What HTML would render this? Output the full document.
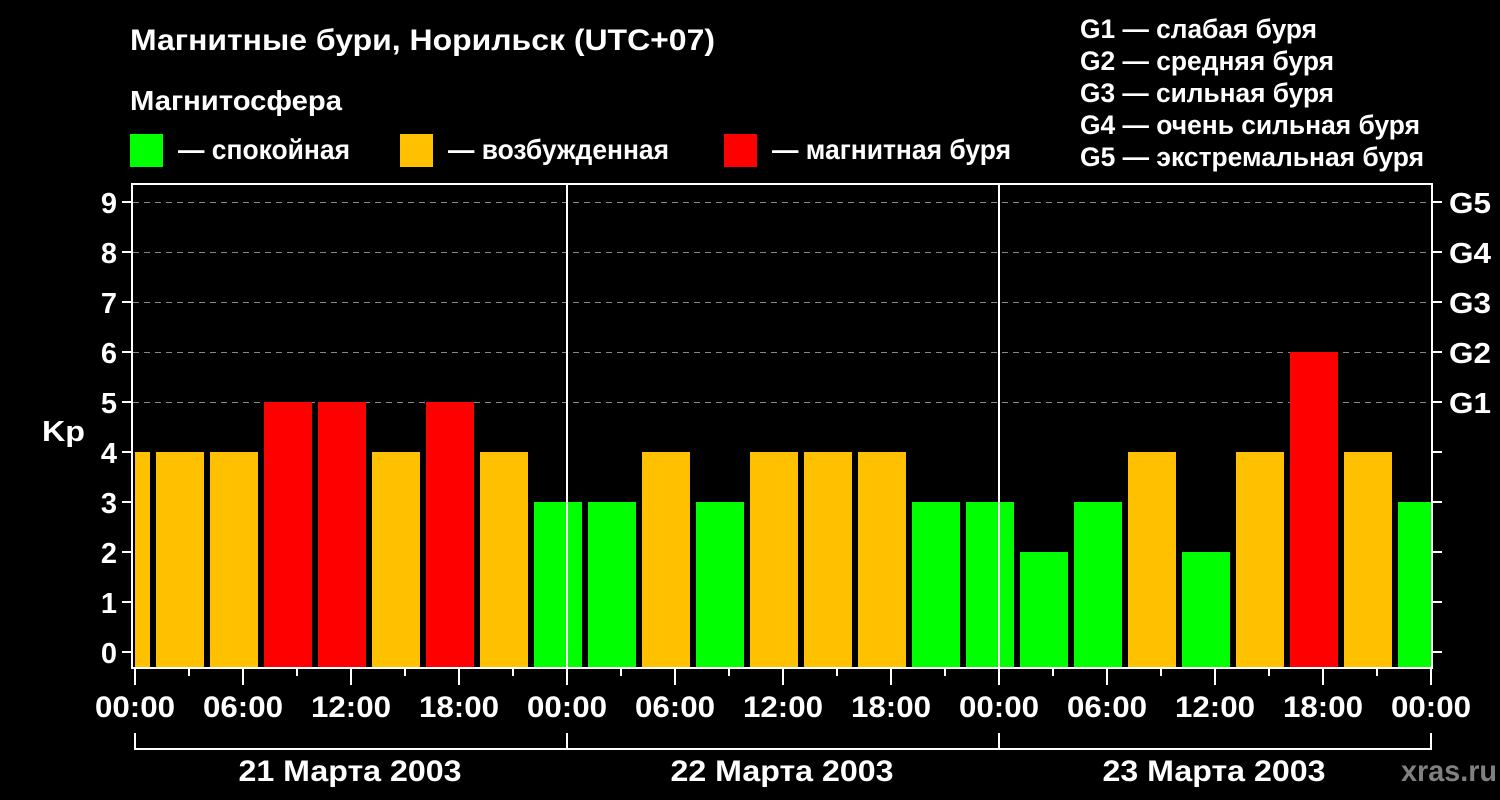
<!DOCTYPE html>
<html><head><meta charset="utf-8"><style>
html,body{margin:0;padding:0;background:#000;}
svg{display:block;}
text{font-family:"Liberation Sans",sans-serif;font-weight:bold;fill:#fff;}
</style></head><body>
<svg width="1500" height="800" viewBox="0 0 1500 800" xmlns="http://www.w3.org/2000/svg">
<rect width="1500" height="800" fill="#000"/>
<text x="130" y="50" font-size="30" textLength="585" lengthAdjust="spacingAndGlyphs">Магнитные бури, Норильск (UTC+07)</text>
<text x="130" y="110" font-size="28" textLength="212" lengthAdjust="spacingAndGlyphs">Магнитосфера</text>
<rect x="130" y="134" width="33" height="33" fill="#00ff00"/>
<text x="178" y="159" font-size="28" textLength="172" lengthAdjust="spacingAndGlyphs">— спокойная</text>
<rect x="400" y="134" width="33" height="33" fill="#ffc000"/>
<text x="448" y="159" font-size="28" textLength="221" lengthAdjust="spacingAndGlyphs">— возбужденная</text>
<rect x="724" y="134" width="33" height="33" fill="#ff0000"/>
<text x="772" y="159" font-size="28" textLength="239" lengthAdjust="spacingAndGlyphs">— магнитная буря</text>
<g font-size="27">
<text x="1080" y="38" textLength="237" lengthAdjust="spacingAndGlyphs">G1 — слабая буря</text>
<text x="1080" y="70" textLength="254" lengthAdjust="spacingAndGlyphs">G2 — средняя буря</text>
<text x="1080" y="102" textLength="254" lengthAdjust="spacingAndGlyphs">G3 — сильная буря</text>
<text x="1080" y="134" textLength="340" lengthAdjust="spacingAndGlyphs">G4 — очень сильная буря</text>
<text x="1080" y="166" textLength="344" lengthAdjust="spacingAndGlyphs">G5 — экстремальная буря</text>
</g>
<g stroke="#888" stroke-width="1" stroke-dasharray="6,5">
<line x1="133" y1="202.5" x2="1431" y2="202.5"/>
<line x1="133" y1="252.5" x2="1431" y2="252.5"/>
<line x1="133" y1="302.5" x2="1431" y2="302.5"/>
<line x1="133" y1="352.5" x2="1431" y2="352.5"/>
<line x1="133" y1="402.5" x2="1431" y2="402.5"/>
</g>
<g>
<rect x="135" y="452" width="15" height="216" fill="#ffc000"/>
<rect x="156" y="452" width="48" height="216" fill="#ffc000"/>
<rect x="210" y="452" width="48" height="216" fill="#ffc000"/>
<rect x="264" y="402" width="48" height="266" fill="#ff0000"/>
<rect x="318" y="402" width="48" height="266" fill="#ff0000"/>
<rect x="372" y="452" width="48" height="216" fill="#ffc000"/>
<rect x="426" y="402" width="48" height="266" fill="#ff0000"/>
<rect x="480" y="452" width="48" height="216" fill="#ffc000"/>
<rect x="534" y="502" width="48" height="166" fill="#00ff00"/>
<rect x="588" y="502" width="48" height="166" fill="#00ff00"/>
<rect x="642" y="452" width="48" height="216" fill="#ffc000"/>
<rect x="696" y="502" width="48" height="166" fill="#00ff00"/>
<rect x="750" y="452" width="48" height="216" fill="#ffc000"/>
<rect x="804" y="452" width="48" height="216" fill="#ffc000"/>
<rect x="858" y="452" width="48" height="216" fill="#ffc000"/>
<rect x="912" y="502" width="48" height="166" fill="#00ff00"/>
<rect x="966" y="502" width="48" height="166" fill="#00ff00"/>
<rect x="1020" y="552" width="48" height="116" fill="#00ff00"/>
<rect x="1074" y="502" width="48" height="166" fill="#00ff00"/>
<rect x="1128" y="452" width="48" height="216" fill="#ffc000"/>
<rect x="1182" y="552" width="48" height="116" fill="#00ff00"/>
<rect x="1236" y="452" width="48" height="216" fill="#ffc000"/>
<rect x="1290" y="352" width="48" height="316" fill="#ff0000"/>
<rect x="1344" y="452" width="48" height="216" fill="#ffc000"/>
<rect x="1398" y="502" width="33" height="166" fill="#00ff00"/>
</g>
<g stroke="#fff" stroke-width="2" fill="none">
<rect x="132" y="184" width="1300" height="484"/>
<line x1="567" y1="183" x2="567" y2="668"/>
<line x1="999" y1="183" x2="999" y2="668"/>
<path d="M122 202H132M122 252H132M122 302H132M122 352H132M122 402H132M122 452H132M122 502H132M122 552H132M122 602H132M122 652H132"/>
<path d="M1432 202H1442M1432 252H1442M1432 302H1442M1432 352H1442M1432 402H1442M1432 452H1442M1432 502H1442M1432 552H1442M1432 602H1442M1432 652H1442"/>
<path d="M135 668V685M189 668V676M243 668V685M297 668V676M351 668V685M405 668V676M459 668V685M513 668V676M567 668V685M621 668V676M675 668V685M729 668V676M783 668V685M837 668V676M891 668V685M945 668V676M999 668V685M1053 668V676M1107 668V685M1161 668V676M1215 668V685M1269 668V676M1323 668V685M1377 668V676M1431 668V685"/>
<path d="M135 733V749H1431V733M567 733V749M999 733V749"/>
</g>
<g font-size="29" text-anchor="end">
<text x="117" y="213">9</text><text x="117" y="263">8</text><text x="117" y="313">7</text><text x="117" y="363">6</text><text x="117" y="413">5</text><text x="117" y="463">4</text><text x="117" y="513">3</text><text x="117" y="563">2</text><text x="117" y="613">1</text><text x="117" y="663">0</text>
</g>
<text x="42" y="441" font-size="29" textLength="43" lengthAdjust="spacingAndGlyphs">Kp</text>
<g font-size="29">
<text x="1449" y="213" textLength="42" lengthAdjust="spacingAndGlyphs">G5</text><text x="1449" y="263" textLength="42" lengthAdjust="spacingAndGlyphs">G4</text><text x="1449" y="313" textLength="42" lengthAdjust="spacingAndGlyphs">G3</text><text x="1449" y="363" textLength="42" lengthAdjust="spacingAndGlyphs">G2</text><text x="1449" y="413" textLength="42" lengthAdjust="spacingAndGlyphs">G1</text>
</g>
<g font-size="30" text-anchor="middle">
<text x="135" y="717" textLength="80" lengthAdjust="spacingAndGlyphs">00:00</text><text x="243" y="717" textLength="80" lengthAdjust="spacingAndGlyphs">06:00</text><text x="351" y="717" textLength="80" lengthAdjust="spacingAndGlyphs">12:00</text><text x="459" y="717" textLength="80" lengthAdjust="spacingAndGlyphs">18:00</text>
<text x="567" y="717" textLength="80" lengthAdjust="spacingAndGlyphs">00:00</text><text x="675" y="717" textLength="80" lengthAdjust="spacingAndGlyphs">06:00</text><text x="783" y="717" textLength="80" lengthAdjust="spacingAndGlyphs">12:00</text><text x="891" y="717" textLength="80" lengthAdjust="spacingAndGlyphs">18:00</text>
<text x="999" y="717" textLength="80" lengthAdjust="spacingAndGlyphs">00:00</text><text x="1107" y="717" textLength="80" lengthAdjust="spacingAndGlyphs">06:00</text><text x="1215" y="717" textLength="80" lengthAdjust="spacingAndGlyphs">12:00</text><text x="1323" y="717" textLength="80" lengthAdjust="spacingAndGlyphs">18:00</text>
<text x="1431" y="717" textLength="80" lengthAdjust="spacingAndGlyphs">00:00</text>
<text x="350" y="781" textLength="223" lengthAdjust="spacingAndGlyphs">21 Марта 2003</text>
<text x="782" y="781" textLength="223" lengthAdjust="spacingAndGlyphs">22 Марта 2003</text>
<text x="1214" y="781" textLength="223" lengthAdjust="spacingAndGlyphs">23 Марта 2003</text>
</g>
<text x="1401" y="781" font-size="30" textLength="96" lengthAdjust="spacingAndGlyphs" style="fill:#808080">xras.ru</text>
</svg>
</body></html>
